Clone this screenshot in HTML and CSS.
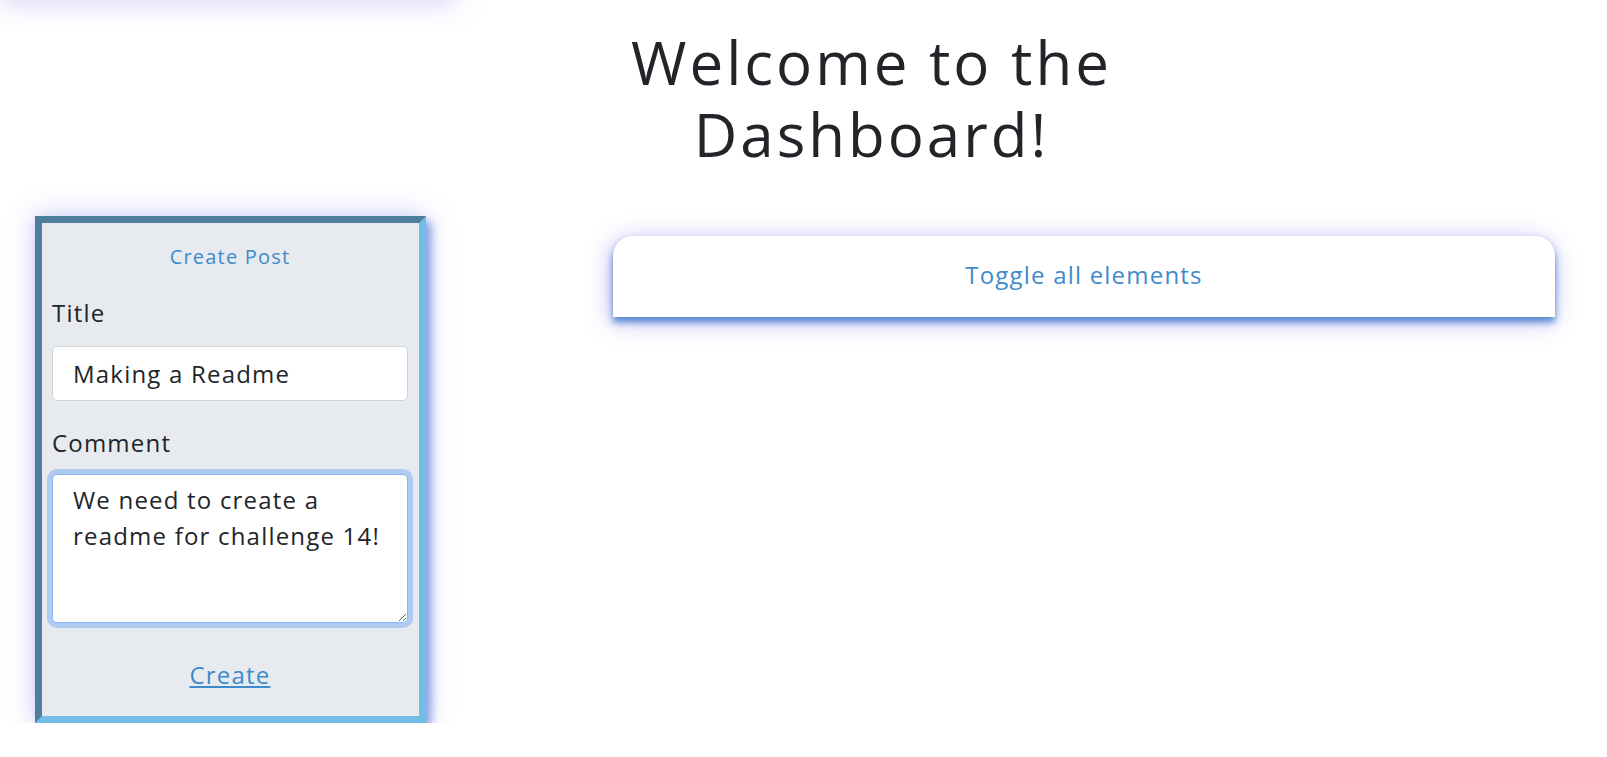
FILE: index.html
```html
<!DOCTYPE html>
<html lang="en">
<head>
<meta charset="utf-8">
<title>Dashboard</title>
<link rel="stylesheet" href="styles.css">
</head>
<body>
<nav class="topbar"></nav>
<header class="hero">
  <h1 class="hero-title">Welcome to the Dashboard!</h1>
</header>
<main class="layout">
  <section class="post-card">
    <h2 class="post-card-title">Create Post</h2>
    <form class="post-form">
      <label class="field-label" for="title">Title</label>
      <input class="field-input" id="title" type="text" value="Making a Readme">
      <label class="field-label field-label-comment" for="comment">Comment</label>
      <textarea class="field-input field-textarea is-focused" id="comment">We need to create a readme for challenge 14!</textarea>
      <div class="form-actions"><a class="create-link" href="#">Create</a></div>
    </form>
  </section>
  <section class="content">
    <div class="toggle-card"><a class="toggle-link" href="#">Toggle all elements</a></div>
  </section>
</main>
</body>
</html>
```

FILE: styles.css
```css
* { box-sizing: border-box; }
html, body { margin: 0; padding: 0; background: #ffffff; }
body {
  font-family: "Open Sans", "Noto Sans", sans-serif;
  color: #212529;
  letter-spacing: 0.075em;
  overflow: hidden;
}
.topbar {
  width: 455px;
  height: 40px;
  margin-top: -40px;
  background: #ffffff;
  box-shadow: 0 0 30px rgba(110, 100, 235, 0.35);
}
.hero {
  display: flex;
  justify-content: center;
  padding-left: 136px;
}
.hero-title {
  width: 560px;
  margin: 26px 0 0;
  text-align: center;
  font-size: 60px;
  line-height: 72px;
  font-weight: 400;
  letter-spacing: 0.05em;
}
.layout {
  display: flex;
  align-items: flex-start;
  padding-left: 35px;
  margin-top: 46px;
}
.post-card {
  width: 391px;
  flex: none;
  background: #e7eaef;
  border: 7px solid;
  border-color: #4d7e9b #73bde9 #73bde9 #4d7e9b;
  padding: 19px 11px 20px 10px;
  box-shadow: 5px 6px 8px rgba(70, 120, 210, 0.6), 0 0 26px rgba(110, 100, 240, 0.35);
}
.post-card-title {
  margin: 0;
  text-align: center;
  font-size: 20px;
  line-height: 30px;
  font-weight: 400;
  color: #3e8acc;
}
.post-form { display: flex; flex-direction: column; }
.field-label {
  font-size: 24px;
  line-height: 36px;
  margin: 23px 0 15px;
}
.field-label-comment { margin-top: 24px; margin-bottom: 13px; }
.field-input {
  width: 100%;
  height: 55px;
  font-family: inherit;
  letter-spacing: inherit;
  font-size: 24px;
  color: #212529;
  padding: 0 20px;
  background: #ffffff;
  border: 1px solid #ced4da;
  border-radius: 5px;
  outline: none;
}
.field-textarea {
  height: 149px;
  padding: 7px 20px;
  line-height: 36px;
  resize: vertical;
}
.field-textarea.is-focused {
  border-color: #86b7fe;
  box-shadow: 0 0 0 5px rgba(13, 110, 253, 0.25);
}
.form-actions {
  text-align: center;
  margin-top: 34px;
  line-height: 36px;
}
.create-link {
  font-size: 24px;
  line-height: 36px;
  color: #3e8acc;
  text-decoration: underline;
}
.content {
  flex: 1;
  padding: 20px 52px 0 187px;
}
.toggle-card {
  height: 81px;
  padding-bottom: 5px;
  background: #ffffff;
  border-radius: 20px 20px 0 0;
  display: flex;
  align-items: center;
  justify-content: center;
  box-shadow: 0 5px 7px rgba(65, 125, 200, 0.9), -2px 4px 24px rgba(110, 100, 240, 0.45);
}
.toggle-link {
  font-size: 24px;
  color: #3e8acc;
  text-decoration: none;
}
```
